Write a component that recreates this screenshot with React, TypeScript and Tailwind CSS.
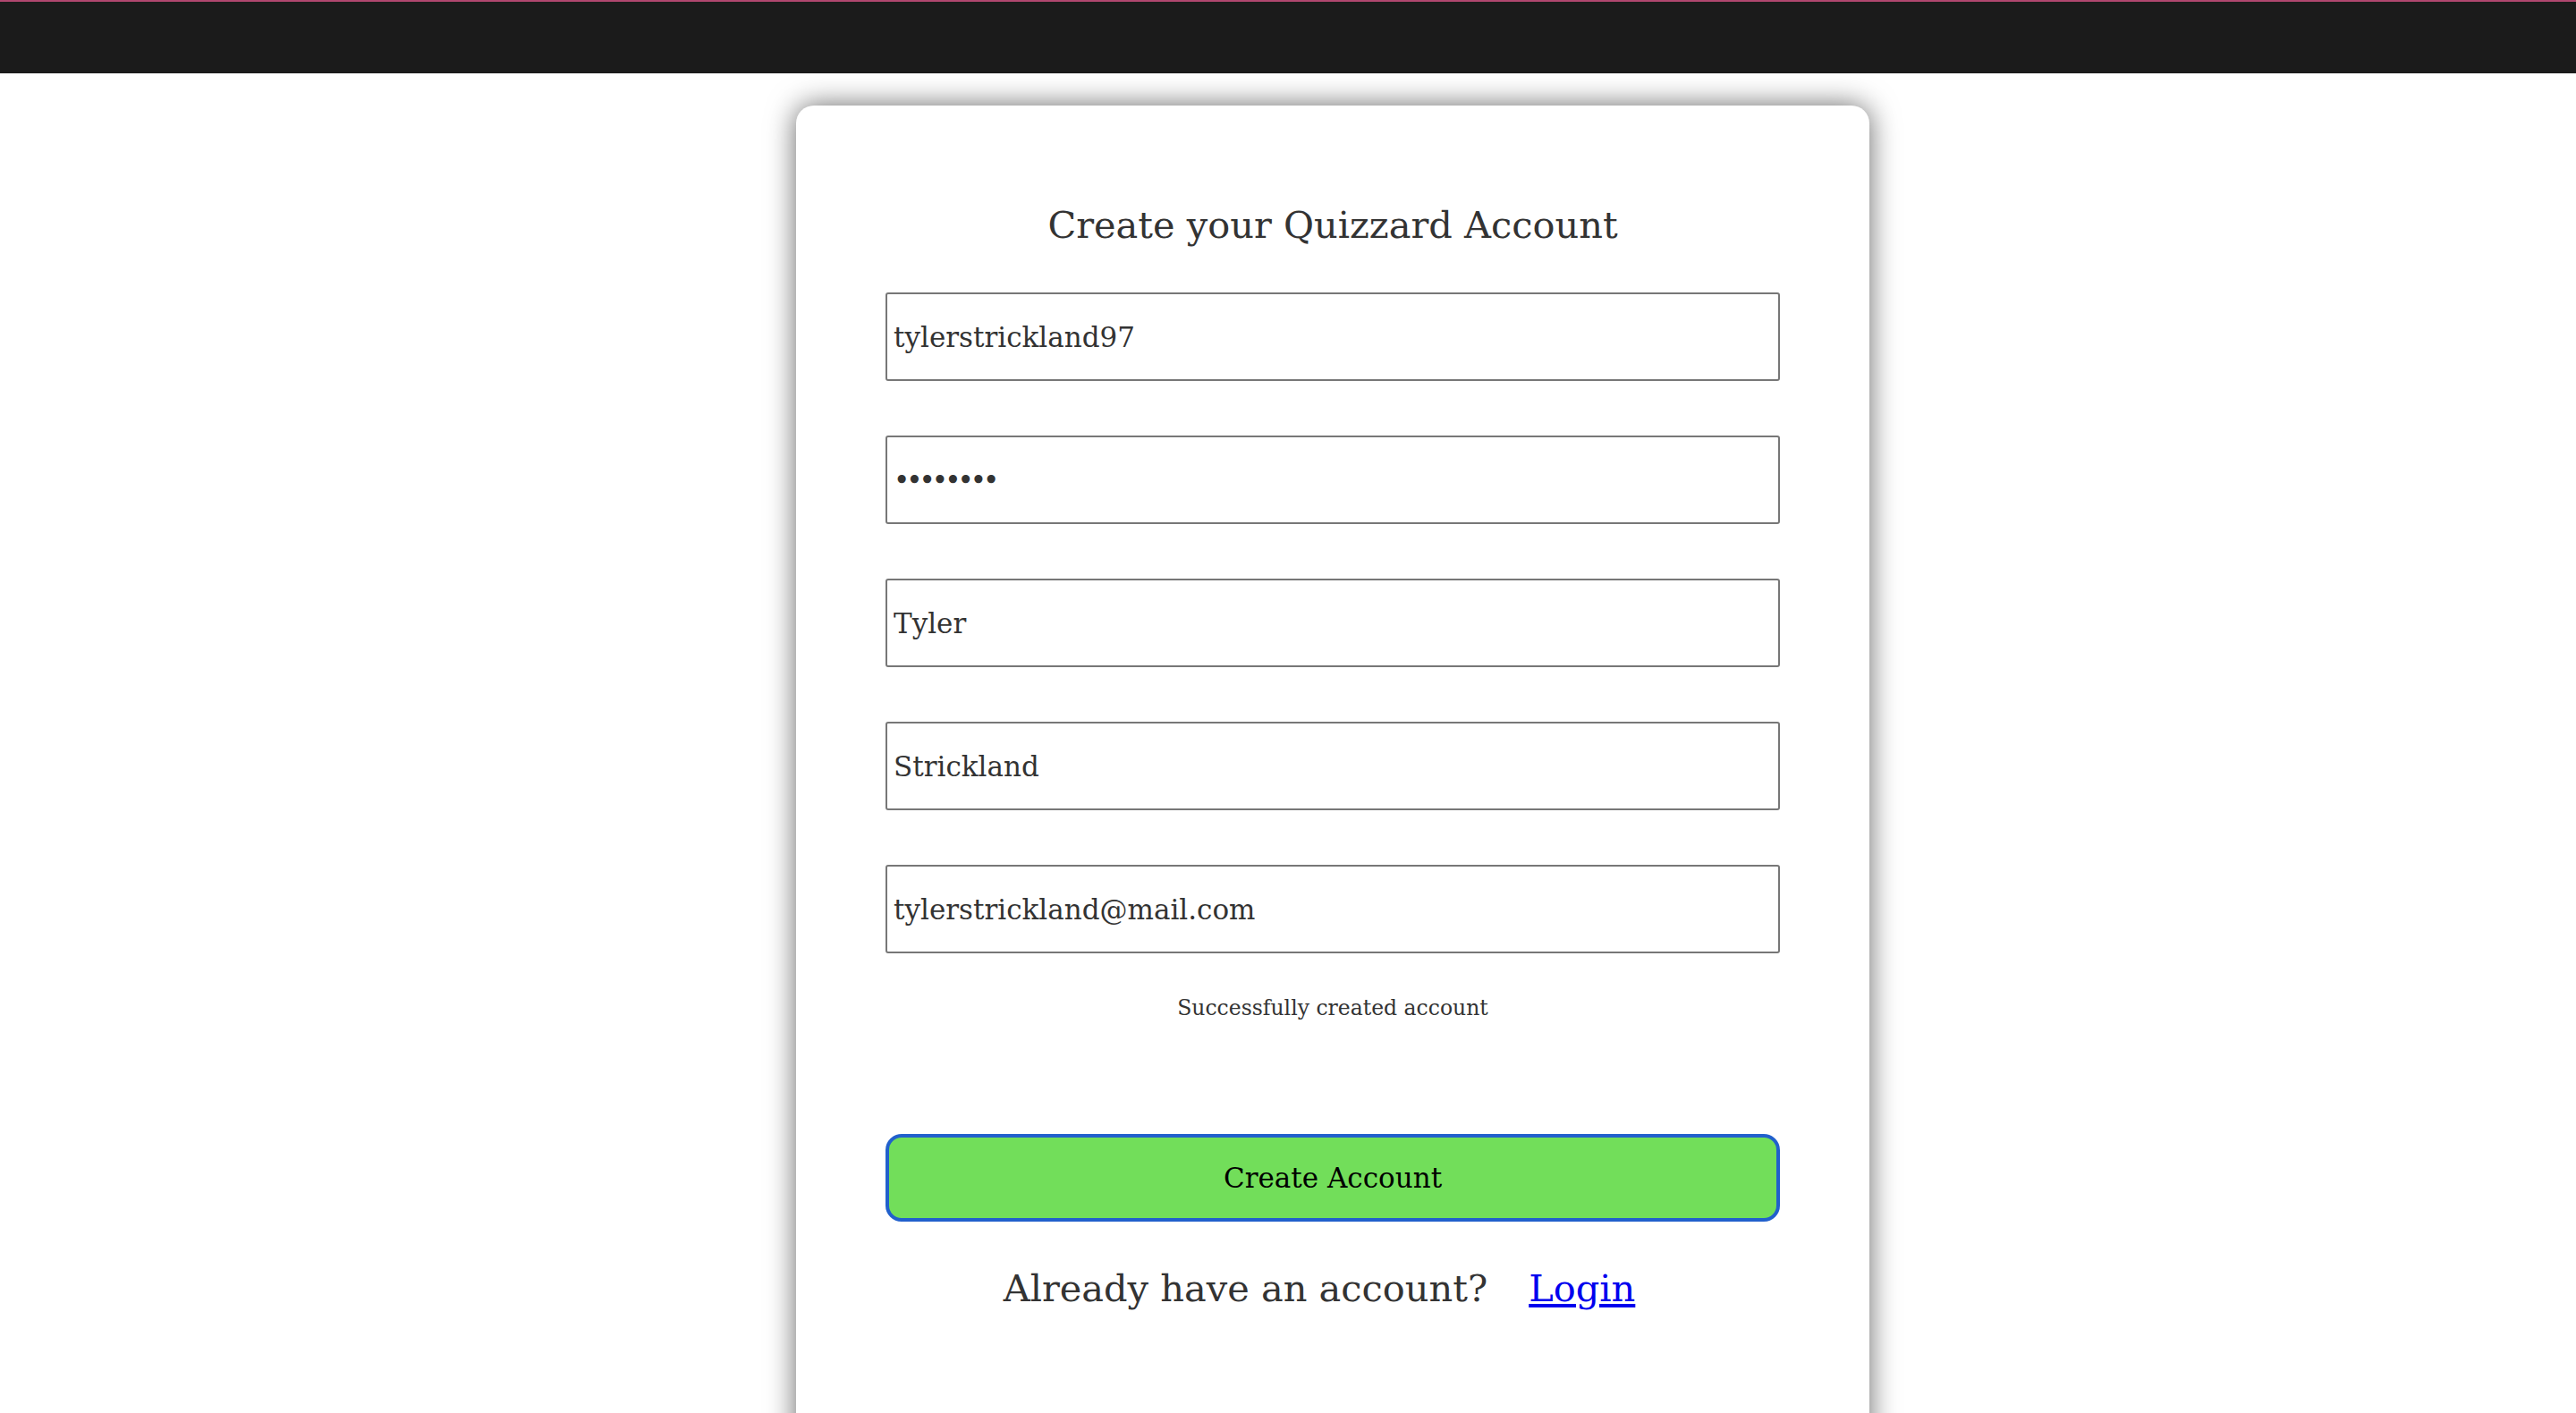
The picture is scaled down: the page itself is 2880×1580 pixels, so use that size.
import React, { useState } from 'react';

const fields = [
  { name: 'username', type: 'text', value: 'tylerstrickland97' },
  { name: 'password', type: 'password', value: 'password' },
  { name: 'firstName', type: 'text', value: 'Tyler' },
  { name: 'lastName', type: 'text', value: 'Strickland' },
  { name: 'email', type: 'email', value: 'tylerstrickland@mail.com' },
];

export default function App() {
  const [values, setValues] = useState<Record<string, string>>(
    Object.fromEntries(fields.map((f) => [f.name, f.value]))
  );

  return (
    <div className="h-[1580px] overflow-hidden bg-white font-['DejaVu_Serif',Georgia,serif]">
      <div className="h-[82px] border-t-2 border-[#b0476f] bg-[#1b1b1b]" />
      <div className="flex justify-center pl-[100px] pt-[36px]">
        <div className="flex h-[1560px] w-[1200px] flex-col items-center rounded-[20px] bg-white pt-[110px] shadow-[0_0_32px_rgba(0,0,0,0.6)]">
          <h1 className="text-[41.5px] leading-[48px] text-[#333]">Create your Quizzard Account</h1>

          <form className="mt-[51px] flex w-[1000px] flex-col gap-[61px]" onSubmit={(e) => e.preventDefault()}>
            {fields.map((f) => (
              <input
                key={f.name}
                type={f.type}
                value={values[f.name]}
                onChange={(e) => setValues({ ...values, [f.name]: e.target.value })}
                className={`h-[99px] w-full rounded-[3px] border-2 border-[#777] px-[7px] text-[31px] text-[#333] outline-none ${
                  f.type === 'password' ? 'tracking-[-4px]' : ''
                }`}
              />
            ))}
          </form>

          <p className="mt-[46px] text-[23.5px] leading-[30px] text-[#333]">Successfully created account</p>

          <button className="mt-[126px] h-[98px] w-[1000px] rounded-[18px] border-4 border-[#2160cc] bg-[#72de5a] text-[31px] text-black">
            Create Account
          </button>

          <div className="mt-[51px] flex items-center gap-[46px] pr-[30px] text-[41.5px] leading-[48px]">
            <span className="text-[#333]">Already have an account?</span>
            <a href="#" className="text-[#0000ee] underline">Login</a>
          </div>
        </div>
      </div>
    </div>
  );
}
